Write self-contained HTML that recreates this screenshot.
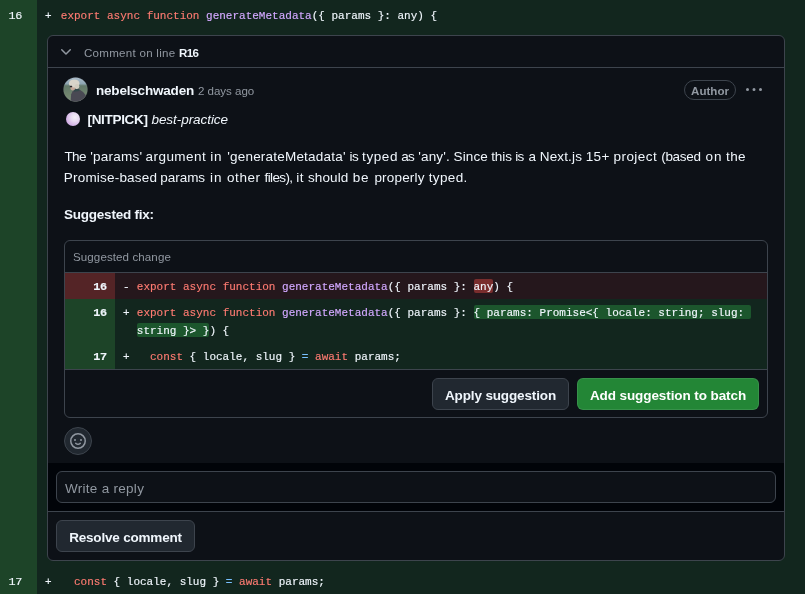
<!DOCTYPE html>
<html lang="en">
<head>
<meta charset="utf-8">
<title>Review comment</title>
<style>
*{box-sizing:border-box;margin:0;padding:0}
html,body{width:805px;height:594px;overflow:hidden;background:#12261e}
body{position:relative;font-family:"Liberation Sans",sans-serif;font-size:14px;color:#f0f6fc;-webkit-font-smoothing:antialiased}
.abs{position:absolute}
.t{position:absolute;white-space:pre;line-height:20px}
.mono{font-family:"Liberation Mono",monospace;font-size:11px;white-space:pre;line-height:18px;-webkit-text-stroke:.15px}
.gutter{left:0;top:0;width:37px;height:594px;background:#1d4428}
.k{color:#ff7b72}.f{color:#d2a8ff}.c{color:#79c0ff}
.muted{color:#9198a1}
.b{font-weight:bold}
.box{left:47px;top:35px;width:738px;height:526px;background:#0d1117;border:1px solid #3d444d;border-radius:6px;overflow:hidden}
.hl-d{background:rgba(248,81,73,.4);border-radius:2px;padding:1.6px 0 .4px}
.hl-a{background:rgba(46,160,67,.4);border-radius:2px;padding:1.6px 0 .4px}
.pl{font-size:13.5px;line-height:20px;white-space:pre;height:20px;width:736px}
.pl span{position:absolute;top:0}
.btn{position:absolute;height:32px;border-radius:6px;font-weight:bold;font-size:14px;line-height:33px;text-align:center;white-space:pre}
</style>
</head>
<body>
<div class="abs" id="root" style="left:0;top:0;width:805px;height:594px;will-change:transform">
<div class="abs gutter"></div>

<!-- diff line 16 -->
<span class="t mono" id="ln16" style="left:8.6px;top:7px;font-size:11.8px;letter-spacing:-.4px">16</span>
<span class="t mono" id="pl16" style="left:45px;top:7px">+</span>
<span class="t mono" id="code16" style="left:60.8px;top:7px"><span class="k">export</span> <span class="k">async</span> <span class="k">function</span> <span class="f">generateMetadata</span>({ params }: any) {</span>

<!-- diff line 17 -->
<span class="t mono" id="ln17" style="left:8.6px;top:573px;font-size:11.8px;letter-spacing:-.4px">17</span>
<span class="t mono" id="pl17" style="left:45px;top:573px">+</span>
<span class="t mono" id="code17" style="left:60.8px;top:573px">  <span class="k">const</span> { locale, slug } <span class="c">=</span> <span class="k">await</span> params;</span>

<!-- comment thread box -->
<div class="abs box">
  <!-- coordinates inside are relative to box inner origin (48,36) -->
  <div class="abs" style="left:0;top:0;width:736px;height:31px;border-bottom:1px solid #3d444d;height:32px"></div>
  <svg class="abs" style="left:10px;top:8px" width="16" height="16" viewBox="0 0 16 16" fill="#9198a1"><path d="M12.78 5.22a.749.749 0 0 1 0 1.06l-4.25 4.25a.749.749 0 0 1-1.06 0L3.22 6.28a.749.749 0 1 1 1.06-1.06L8 8.939l3.72-3.719a.749.749 0 0 1 1.06 0Z"/></svg>
  <span class="t muted" id="hdr" style="left:36px;top:7px;font-size:11.57px;letter-spacing:.116px"><span style="letter-spacing:.27px">Comment on line </span><span class="b" style="color:#f0f6fc;letter-spacing:-.55px">R16</span></span>

  <!-- avatar -->
  <svg class="abs" id="avatar" style="left:15px;top:41.2px" width="25" height="25" viewBox="-0.5 -0.5 25 25">
    <defs>
      <clipPath id="avc"><circle cx="12" cy="12" r="12"/></clipPath>
      <linearGradient id="avbg" x1="0" y1="0" x2="0" y2="1"><stop offset="0" stop-color="#aebfcd"/><stop offset=".28" stop-color="#8ea6b3"/><stop offset=".36" stop-color="#62796a"/><stop offset=".7" stop-color="#71866f"/><stop offset="1" stop-color="#7f8f7c"/></linearGradient>
      <filter id="avbl" x="-20%" y="-20%" width="140%" height="140%"><feGaussianBlur stdDeviation=".55"/></filter>
    </defs>
    <g clip-path="url(#avc)">
      <rect x="-1" y="-1" width="26" height="26" fill="url(#avbg)"/>
      <g filter="url(#avbl)">
        <path d="M7 25 L7.6 17 Q8.5 13.5 11 12.6 L16 12 Q20 14 22.5 18 L23 25 Z" fill="#4a4a53"/>
        <path d="M9.5 11.5 L15.5 10.5 L16 13.5 L10.5 14.2 Z" fill="#33484b"/>
        <ellipse cx="9.3" cy="10.3" rx="2.4" ry="2.6" fill="#c3a697"/>
        <ellipse cx="10.7" cy="5.9" rx="5.3" ry="4" fill="#d9d5ca"/>
        <ellipse cx="13.5" cy="9" rx="2.3" ry="2.6" fill="#d2cdc0"/>
        <rect x="6.3" y="8.3" width="2.4" height="1.5" rx=".5" fill="#25282b"/>
      </g>
    </g>
    <circle cx="12" cy="12" r="12.2" fill="none" stroke="rgba(255,255,255,.14)" stroke-width=".6"/>
  </svg>
  <span class="t b" id="uname" style="left:48px;top:45px;font-size:13.5px;letter-spacing:-.194px">nebelschwaden</span>
  <span class="t muted" id="ago" style="left:149.9px;top:45px;font-size:11.57px;letter-spacing:-.02px">2 days ago</span>

  <div class="abs" id="pill" style="left:636px;top:44px;width:52px;height:20px;border:1px solid #3d444d;border-radius:10px"></div>
  <span class="t muted b" id="author" style="left:643px;top:45px;font-size:11.57px;letter-spacing:.026px">Author</span>
  <svg class="abs" style="left:698.2px;top:46.2px" width="16" height="16" viewBox="0 0 16 16" fill="#9198a1"><path d="M8 9a1.5 1.5 0 1 0 0-3 1.5 1.5 0 0 0 0 3ZM1.5 9a1.5 1.5 0 1 0 0-3 1.5 1.5 0 0 0 0 3Zm13 0a1.5 1.5 0 1 0 0-3 1.5 1.5 0 0 0 0 3Z"/></svg>

  <!-- nitpick line -->
  <div class="abs" id="dot" style="left:18.4px;top:75.8px;width:14.1px;height:14.2px;border-radius:50%;background:radial-gradient(circle at 64% 38%,#f6f1f9 0,#eadcf3 32%,#d3b2e6 68%,#bf96d9 100%)"></div>
  <span class="t" id="nit" style="left:39.5px;top:74px;font-size:13.5px"><span class="b" style="letter-spacing:-.314px">[NITPICK]</span> <i style="letter-spacing:-.054px">best-practice</i></span>

  <!-- paragraph -->
  <div class="abs pl" id="p1" style="left:0;top:111px"><span style="left:16.4px;letter-spacing:-0.52px">The </span><span style="left:42.2px;letter-spacing:0.23px">'params' </span><span style="left:97.5px;letter-spacing:0.46px">argument </span><span style="left:162.2px;letter-spacing:0.90px">in </span><span style="left:179.2px;letter-spacing:0.21px">'generateMetadata' </span><span style="left:301.6px;letter-spacing:-0.57px">is </span><span style="left:314.1px;letter-spacing:0.59px">typed </span><span style="left:353.2px;letter-spacing:-0.70px">as </span><span style="left:370.3px;letter-spacing:0.16px">'any'. </span><span style="left:405.5px;letter-spacing:0.13px">Since </span><span style="left:443.2px;letter-spacing:-0.09px">this </span><span style="left:467.3px;letter-spacing:-0.70px">is </span><span style="left:480.5px;letter-spacing:0.00px">a </span><span style="left:491.8px;letter-spacing:0.14px">Next.js </span><span style="left:537.7px;letter-spacing:0.42px">15+ </span><span style="left:565.5px;letter-spacing:0.44px">project </span><span style="left:613.2px;letter-spacing:-0.29px">(based </span><span style="left:657.5px;letter-spacing:0.90px">on </span><span style="left:678.0px;letter-spacing:0.42px">the </span></div>
  <div class="abs pl" id="p2" style="left:0;top:132px"><span style="left:15.8px;letter-spacing:0.20px">Promise-based </span><span style="left:112.2px;letter-spacing:-0.02px">params </span><span style="left:162.1px;letter-spacing:0.90px">in </span><span style="left:179.0px;letter-spacing:0.56px">other </span><span style="left:216.5px;letter-spacing:-0.61px">files), </span><span style="left:248.2px;letter-spacing:0.46px">it </span><span style="left:259.9px;letter-spacing:0.13px">should </span><span style="left:304.7px;letter-spacing:0.90px">be </span><span style="left:326.4px;letter-spacing:0.19px">properly </span><span style="left:380.7px;letter-spacing:0.38px">typed. </span></div>
  <span class="t b" id="fix" style="left:16px;top:169px;font-size:13.5px;letter-spacing:-.229px">Suggested fix:</span>

  <!-- suggestion box: outer (64,240)-(768,418) => rel (16,204) -->
  <div class="abs" id="sbox" style="left:16px;top:204px;width:704px;height:178px;border:1px solid #3d444d;border-radius:6px;overflow:hidden">
    <span class="t muted" id="sc" style="left:8px;top:6px;font-size:11.57px;letter-spacing:.093px">Suggested change</span>
    <div class="abs" style="left:0;top:31px;width:702px;height:1px;background:#3d444d"></div>
    <!-- deletion row -->
    <div class="abs" style="left:0;top:32px;width:702px;height:26px;background:#25171c"></div>
    <div class="abs" style="left:0;top:32px;width:50px;height:26px;background:#542426"></div>
    <!-- addition rows -->
    <div class="abs" style="left:0;top:58px;width:702px;height:70px;background:#12261e"></div>
    <div class="abs" style="left:0;top:58px;width:50px;height:70px;background:#1d4428"></div>
    <div class="abs" style="left:0;top:128px;width:702px;height:1px;background:#3d444d"></div>

    <span class="t mono b" id="s16a" style="left:28.3px;font-size:11.8px;letter-spacing:-.4px;top:37px">16</span>
    <span class="t mono" style="left:58px;top:37px">-</span>
    <span class="t mono" id="sd" style="left:71.8px;top:37px"><span class="k">export</span> <span class="k">async</span> <span class="k">function</span> <span class="f">generateMetadata</span>({ params }: <span class="hl-d">any</span>) {</span>

    <span class="t mono b" id="s16b" style="left:28.3px;font-size:11.8px;letter-spacing:-.4px;top:63px">16</span>
    <span class="t mono" style="left:58px;top:63px">+</span>
    <span class="t mono" id="sa1" style="left:71.8px;top:63px"><span class="k">export</span> <span class="k">async</span> <span class="k">function</span> <span class="f">generateMetadata</span>({ params }: <span class="hl-a">{ params: Promise&lt;{ locale: string; slug: </span><br><span class="hl-a">string }&gt; }</span>) {</span>

    <span class="t mono b" id="s17" style="left:28.3px;font-size:11.8px;letter-spacing:-.4px;top:107px">17</span>
    <span class="t mono" style="left:58px;top:107px">+</span>
    <span class="t mono" id="sa2" style="left:71.8px;top:107px">  <span class="k">const</span> { locale, slug } <span class="c">=</span> <span class="k">await</span> params;</span>

    <div class="btn" id="apply" style="left:367px;top:137px;width:137px;background:#212830;border:1px solid #3d444d;color:#f0f6fc;font-size:13.5px;letter-spacing:-.133px">Apply suggestion</div>
    <div class="btn" id="add" style="left:512px;top:137px;width:182px;background:#238636;border:1px solid rgba(240,246,252,.1);color:#fff;font-size:13.5px;letter-spacing:-.09px">Add suggestion to batch</div>
  </div>

  <!-- emoji button -->
  <div class="abs" id="emo" style="left:16px;top:391px;width:28px;height:28px;border-radius:50%;background:#212830;border:1px solid #3d444d"></div>
  <svg class="abs" style="left:22px;top:397px" width="16" height="16" viewBox="0 0 16 16" fill="#9198a1"><path d="M8 0a8 8 0 1 1 0 16A8 8 0 0 1 8 0ZM1.5 8a6.5 6.5 0 1 0 13 0 6.5 6.5 0 0 0-13 0Zm3.820 1.636a.75.75 0 0 1 1.038.175l.007.009c.103.118.22.222.35.31.264.178.683.37 1.285.37.602 0 1.020-.192 1.285-.371.13-.088.247-.192.350-.31l.007-.008a.75.750 0 0 1 1.222.870l-.022.030c-.182.248-.422.440-.668.609-.473.320-1.177.62-2.174.62-.997 0-1.701-.300-2.174-.62a3.058 3.058 0 0 1-.668-.610l-.022-.030a.75.75 0 0 1 .184-1.044ZM12 7a1 1 0 1 1-2 0 1 1 0 0 1 2 0ZM5 8a1 1 0 1 1 0-2 1 1 0 0 1 0 2Z"/></svg>

  <!-- reply area -->
  <div class="abs" style="left:0;top:427px;width:736px;height:48px;background:#010409"></div>
  <div class="abs" style="left:0;top:475px;width:736px;height:1px;background:#3d444d"></div>
  <div class="abs" id="reply" style="left:8px;top:435px;width:720px;height:32px;border:1px solid #3d444d;border-radius:6px;background:#0d1117"></div>
  <span class="t muted" id="wr" style="left:17px;top:442.5px;font-size:13.5px;letter-spacing:.28px">Write a reply</span>

  <!-- resolve -->
  <div class="btn" id="resolve" style="left:8px;top:484px;width:139px;background:#212830;border:1px solid #3d444d;color:#f0f6fc;font-size:13.5px;letter-spacing:-.188px">Resolve comment</div>
</div>
</div>
</body>
</html>
